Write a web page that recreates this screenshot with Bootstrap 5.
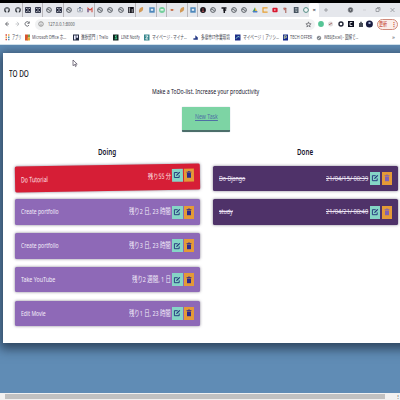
<!DOCTYPE html>
<html lang="ja">
<head>
<meta charset="utf-8">
<title>TO DO</title>
<link href="https://cdn.jsdelivr.net/npm/bootstrap@5.3.0/dist/css/bootstrap.min.css" rel="stylesheet">
<style>
body{width:400px;height:400px;overflow:hidden;background:#608cb5;font-family:"Noto Sans","Noto Sans CJK JP",sans-serif;font-size:6px;line-height:1;color:#17152b}
svg{display:block;flex:none}
.fit{white-space:nowrap;transform-origin:0 50%;flex:none}
.topline{height:3px;background:#000}
.tabs{height:14px;background:#e5e7ec;padding-left:2.3px}
.tabs .tb{width:10.3px;height:14px;flex:none}
.tabs .sep{box-shadow:inset -1px 0 #b9b7bb}
.tabs .tab-on{width:10px;background:#fff;border-radius:2px 2px 0 0;margin-left:-2px}
.tools{height:14px;background:#fff;padding-left:5px}
.addr{width:280px;height:11px;border-radius:6px;background:#f1f2f3;margin-left:4px;padding:0 3px;color:#55575b}
.renew{width:21px;height:11px;border:1px solid #cf8a7c;border-radius:6px;background:#fbeeea;color:#c5402d;font-size:6px;margin-left:4px}
.marks{height:14px;background:#fff;color:#4a4c55;font-size:5.8px;display:grid;grid-template-columns:20px 48px 40px 31px 49px 42px 48px 33px 76px 10px;padding-left:5px;border-bottom:1px solid #cfe0ea}
.marks>div{display:flex;align-items:center;gap:2px}
.stage{height:348px;padding:8px 0 0 2.5px;overflow:hidden}
.sheet{height:290px;width:410px;background:#fff;box-shadow:0 3px 10px 3px rgba(25,40,60,.7);padding:16px 12.5px 0 12.5px}
.brand{font-size:8.2px;font-weight:500;margin-left:-6px;height:10px;color:#101018}
.lead-line{margin:8.5px 0 0 136.5px;height:9px;font-size:7.4px}
.new-task{width:48px;height:24.5px;margin:10.5px 0 0 167px;background:#7dd4a4;border:0;border-bottom:2.5px solid #4c6e6a;border-radius:1px;box-shadow:0 0 1px #7898b0;color:#4f70a5;font-size:7.7px;padding-bottom:2px}
.boards{display:grid;grid-template-columns:185px 185px;column-gap:12.5px;margin-top:15px}
.boards h2{font-size:8.2px;font-weight:600;line-height:10px;height:11px;margin:0 0 8px;display:flex;justify-content:center;color:#17152b}
.task{height:25.6px;margin-bottom:8.2px;background:#8e69b7;border-radius:1.5px;box-shadow:0 0 3px rgba(50,40,70,.6);color:#f3edf9;padding:0 6px;font-size:7.5px}
.task .act{width:10.5px;height:13px;background:#85d5c6;color:#1f2f78;margin-left:1.5px}
.task .act+.act{width:10px;background:#e49a37;margin-left:1.3px;color:#2c2a8e}
.task.late{background:#d61e36;transform:rotate(-1deg);margin-top:-.5px;margin-bottom:8.7px;color:#ffe7ea}
.task.late .act{margin-bottom:3px}
.task.late .fit{padding-top:2px}
.task.late .fit.ms-auto{padding-top:0}
.task.ended{background:#4f3269;text-decoration:line-through;color:#ece4f4}
.task.ended .act+.act{color:#8062b4}
.hbar{height:7px;background:#f1f1f1;padding:1px 0 1px 5px}
.hbar .thumb{width:380px;height:5px;background:#c1c1c1}
.hbar .grip{font-size:4px}
.pointer{position:absolute;left:72px;top:59px}
</style>
<script src="https://cdn.jsdelivr.net/npm/bootstrap@5.3.0/dist/js/bootstrap.bundle.min.js"></script>
</head>
<body>
<svg width="0" height="0" class="position-absolute">
<defs>
<symbol id="git" viewBox="0 0 8 8"><circle cx="4" cy="4" r="2.8" fill="#30343a"/><path d="M2.5 2.2 3.3 2.5H4.7L5.5 2.2V4.5L4.8 5.2V7H3.2V5.2L2.5 4.5Z" fill="#dfe2e8"/></symbol>
<symbol id="box" viewBox="0 0 8 8"><path d="M1.2 1.2h5.6v5.6H1.2z" fill="#10162b"/><path d="M2 2.3 4 3.2 6 2.3M2 5.6 4 4.8 6 5.6" stroke="#e8e9f0" fill="none" stroke-width=".8"/></symbol>
<symbol id="globe" viewBox="0 0 8 8"><circle cx="4" cy="4" r="2.4" fill="#dfe2e6" stroke="#5f646b"/><path d="M2 3.2 4 3.4 4.3 4.5 5.8 5" stroke="#5f646b" fill="none" stroke-width=".9"/></symbol>
<symbol id="cal" viewBox="0 0 8 8"><path d="M1.7 2.5h4.6v3.3H1.7z" fill="#f4f5f8" stroke="#8a929c" stroke-width=".7"/><path d="M3 1.6h2M3 4.1h2" stroke="#536d92"/></symbol>
<symbol id="mail" viewBox="0 0 8 8"><path d="M2 6.2V2.3L4 4.1 6 2.3V6.2" stroke="#d44a3c" fill="none" stroke-width="1.1"/><path d="M2 3v3.2" stroke="#4a6cb8" stroke-width="1"/></symbol>
<symbol id="black" viewBox="0 0 8 8"><path d="M1.2 1h5.6v6H1.2z" fill="#101018"/><path d="M2.6 1.5v5M5.2 3v3.5" stroke="#eee" stroke-width=".7"/></symbol>
<symbol id="leaf" viewBox="0 0 8 8"><path d="M2 6.7Q1.2 1.7 6 1.1 7.1 5.6 2 6.7" fill="#d29a58"/></symbol>
<symbol id="blue" viewBox="0 0 8 8"><path d="M1.3 1.3h5.4v5.4H1.3z" fill="#4d87bb"/><path d="M2.8 2.8h2.4v2H2.8z" fill="#e5eef6"/></symbol>
<symbol id="green" viewBox="0 0 8 8"><circle cx="4" cy="4" r="3" fill="#73cf9c"/><path d="M2.5 3h3v1.7h-3z" fill="#e6f5ec"/></symbol>
<symbol id="dash" viewBox="0 0 8 8"><path d="M1.5 4Q4 2 6.5 4 4 5.4 1.5 4" fill="#e7a26b"/><path d="M3 4h2" stroke="#a53c31"/></symbol>
<symbol id="ball" viewBox="0 0 8 8"><circle cx="4" cy="4" r="2.9" fill="#15131a"/><path d="M4 2.2v3M2.8 5.4h2.4" stroke="#c65d5d" stroke-width=".8"/></symbol>
<symbol id="mono" viewBox="0 0 8 8"><path d="M1.5 2h5M3.2 4h3M4.3 2v5" stroke="#17171c" stroke-width="1.5"/></symbol>
<symbol id="drive" viewBox="0 0 8 8"><path d="M4 1.3 6.6 5.9H4Z" fill="#e3b73c"/><path d="M4 1.3 1.4 5.9H4Z" fill="#3e9b66"/><path d="M2 5h4.3v1.5H2z" fill="#4a7bc9"/></symbol>
<symbol id="orange" viewBox="0 0 8 8"><path d="M6.6 1.9H2V6.1h4.6" fill="none" stroke="#e7a02f" stroke-width="1.2"/><path d="M4 3h2v2H4z" fill="#f4e5ca"/></symbol>
<symbol id="play" viewBox="0 0 8 8"><rect x="1.4" y="1.8" width="5.2" height="4.4" rx="1" fill="#d8182f"/><path d="M3.4 3v2L5 4z" fill="#fff"/></symbol>
<symbol id="para" viewBox="0 0 8 8"><path d="M2.5 2.3h2.7M4.8 2v5" stroke="#a15750" stroke-width="1"/><path d="M2.7 1.8h1.6v2.4H2.7z" fill="#bf766d"/></symbol>
<symbol id="slate" viewBox="0 0 8 8"><path d="M1.8 1h4.7v6H1.8z" fill="#46535f"/><path d="M3 2.4h2.4M3 4h2.4M3.5 5.5h1.7" stroke="#cbd2d9" stroke-width=".7"/></symbol>
<symbol id="ring" viewBox="0 0 8 8"><circle cx="4" cy="4" r="2.4" fill="#f4f6f7" stroke="#4f8a81"/></symbol>
<symbol id="edit" viewBox="0 0 8 8"><path d="M4.7 1.7H1.4v5h4.8V4.4" fill="none" stroke="currentColor" stroke-width=".9"/><path d="M3.1 5.1 3.4 3.9 6.4.9 7.2 1.7 4.2 4.8Z" fill="currentColor"/></symbol>
<symbol id="bin" viewBox="0 0 8 8"><path d="M1.6 1.6h4.8M3.2 1h1.6" stroke="currentColor" stroke-width=".9"/><path d="M2 2.5h4V7.2H2z" fill="currentColor"/></symbol>
</defs>
</svg>

<div class="topline"></div>
<div class="tabs d-flex" id="tabs"></div>
<div class="tools d-flex align-items-center">
  <svg width="26" height="8" viewBox="0 0 26 8" fill="none" stroke="#55585e" stroke-width=".8"><path d="M2.6 1.8.6 4 2.6 6.2M.6 4H4"/><path d="M12 1.8 14 4 12 6.2M14 4H10.6" stroke="#b9bbbf"/><path d="M24 2.6A2.2 2.2 0 1 0 24 5.2M24.3 1.5V3.3H22.3"/></svg>
  <div class="addr d-flex align-items-center">
    <svg width="6" height="6" viewBox="0 0 6 6" fill="none" stroke="#777" stroke-width=".7"><circle cx="3" cy="3" r="2.3"/><path d="M3 1.5v.7M3 2.7v2"/></svg>
    <span class="fit ms-1" data-w="27">127.0.0.1:8000</span>
    <svg class="ms-auto" width="7" height="7" viewBox="0 0 8 8" fill="none" stroke="#5a5c62" stroke-width=".8"><path d="M4 1 4.8 3.2H7L5.2 4.6 5.9 6.8 4 5.5 2.1 6.8 2.8 4.6 1 3.2H3.2Z"/></svg>
  </div>
  <svg width="58" height="8" viewBox="0 0 58 8"><circle cx="6" cy="4" r="2.9" fill="#56c596"/><circle cx="15.5" cy="4" r="2.5" fill="#dedbdc"/><path d="M14 4.8 17 3" stroke="#a8706f"/><circle cx="26" cy="4" r="2" fill="none" stroke="#222636" stroke-width="1.4"/><path d="M33 1h6v6h-6z" fill="#0d1020"/><path d="M37.3 2.5H35v3h2.3" fill="none" stroke="#fff" stroke-width=".8"/><path d="M44 3h1.2V1.8h1.6V3H48v4h-4z" fill="#454b55"/><circle cx="54.4" cy="4" r="3.5" fill="#181c40"/><path d="M53.5 2h2v2h-2z" fill="#a9b5d4"/></svg>
  <div class="renew d-flex align-items-center justify-content-center"><span class="fit" data-w="8">更新</span><b class="ms-1">⋮</b></div>
</div>
<div class="marks">
  <div><svg width="5" height="7" viewBox="0 0 5 7"><path d="M.5 1h1.5M.5 5.5h1.5" stroke="#d94a3c" stroke-width="1.4"/><path d="M3 1h1.5M.5 3.3h1.5" stroke="#e7a23f" stroke-width="1.4"/><path d="M3 3.3h1.5M3 5.5h1.5" stroke="#4f8fb5" stroke-width="1.4"/></svg><span class="fit" data-w="9">アプリ</span></div>
  <div><svg width="5" height="7" viewBox="0 0 5 7"><path d="M0 .5h3V6.5H0z" fill="#d6552f"/><path d="M3 .5h2v3H3z" fill="#7aa24a"/><path d="M2.5 3.5H5v3H2.5z" fill="#e6ac37"/></svg><span class="fit" data-w="34">Microsoft Office ホ...</span></div>
  <div><svg width="6" height="7" viewBox="0 0 6 7"><path d="M0 .5h6v6H0z" fill="#232b42"/><path d="M1 1.5h1.7v4H1zM3.4 1.5H5v2.3H3.4z" fill="#eef"/></svg><span class="fit" data-w="27">進捗部門 | Trello</span></div>
  <div><svg width="6" height="7" viewBox="0 0 6 7"><path d="M0 .5h5.5v6H0z" fill="#12231f"/><path d="M4 2H2.2L3.8 4.8H1.7" stroke="#42cf8b" fill="none"/></svg><span class="fit" data-w="19">LINE Notify</span></div>
  <div><svg width="6" height="7" viewBox="0 0 6 7"><path d="M0 .5h5.5v6H0z" fill="#36868d"/><path d="M1.5 2H4L1.7 5H4" stroke="#e5f1f0" fill="none"/></svg><span class="fit" data-w="35">マイページ - マイナ...</span></div>
  <div><svg width="6" height="7" viewBox="0 0 6 7"><path d="M2.3 1.3 4.8 3.5V5.7H0.4V4.2H2.3z" fill="#273b86"/></svg><span class="fit" data-w="29">多摩市IT作業環境</span></div>
  <div><svg width="6" height="7" viewBox="0 0 6 7"><path d="M0 .5h5.5v6H0z" fill="#1d2d87"/><path d="M1 4.7Q3 1 4.6 3" stroke="#83cbd0" fill="none"/></svg><span class="fit" data-w="36">マイページ | アソシ...</span></div>
  <div><svg width="5" height="7" viewBox="0 0 5 7"><path d="M0 .5h5v6H0z" fill="#152a8e"/><path d="M1.3 5V1.8h2v2H1.5" stroke="#d7df9c" fill="none" stroke-width=".8"/></svg><span class="fit" data-w="22">TECH OFFER</span></div>
  <div><svg width="6" height="8"><use href="#globe" width="6" height="8"/></svg><span class="fit" data-w="34">WBS(Excel) - 図解で...</span></div>
  <div>»</div>
</div>

<main class="stage">
  <section class="sheet">
    <div class="brand d-flex align-items-center"><span class="fit" data-w="19.5">TO DO</span></div>
    <div class="lead-line d-flex align-items-center"><span class="fit" data-w="107.5">Make a ToDo-list. Increase your productivity</span></div>
    <a class="new-task d-flex align-items-center justify-content-center" href="#"><span class="fit" data-w="23">New Task</span></a>
    <div class="boards">
      <div id="doing"><h2><span class="fit" data-w="18.5">Doing</span></h2></div>
      <div id="done"><h2><span class="fit" data-w="16">Done</span></h2></div>
    </div>
  </section>
</main>
<div class="hbar d-flex align-items-center"><div class="thumb"></div><span class="grip ms-auto me-0">⋮</span></div>
<svg class="pointer" width="6" height="9" viewBox="0 0 6 9"><path d="M1 1V6.7L2.5 5.5 3.5 7.6 4.3 7.1 3.4 5.1H5.2Z" fill="#fff" stroke="#4a4458" stroke-width=".7"/></svg>

<script>
const tabIcons = 'git git| box box| globe box| globe cal mail| globe globe globe black| leaf blue| green| dash leaf| blue| ball globe mono globe globe drive orange play para slate ring'.split(' ');
document.getElementById('tabs').innerHTML = tabIcons.map(n =>
  `<div class="tb d-flex align-items-center justify-content-center ${n.endsWith('|') ? 'sep' : ''}"><svg width="8" height="8"><use href="#${n.replace('|','')}"/></svg></div>`).join('') +
  `<div class="tab-on d-flex align-items-center justify-content-center">×</div>
   <svg width="80" height="14" viewBox="0 0 80 14" fill="none" stroke="#85888e" stroke-width=".7"><path d="M5 7h4M7 5v4"/><circle cx="31.5" cy="7" r="2.4" fill="#555960"/><path d="M30.5 6.5h2l-1 1.2z" fill="#fff" stroke="none"/><path d="M44 7h3" stroke="#c4c6ca"/><path d="M57 5.5h3v3h-3zM58 4.5h3v3M71.5 5l4 4M75.5 5l-4 4"/></svg>`;
const tasks = {
  doing: [['Do Tutorial',27,'残り55 分',23,'late'],['Create portfolio',38,'残り2 日, 23 時間',41.5,''],['Create portfolio',38,'残り3 日, 23 時間',41.5,''],['Take YouTube',34,'残り2 週間, 1 日',39,''],['Edit Movie',25,'残り1 日, 23 時間',41.5,'']],
  done: [['Do Django',26,'21/04/15/ 08:39',42,'ended'],['study',13.5,'21/04/21/ 08:40',42,'ended']]
};
for (const id in tasks) tasks[id].forEach(([n, a, t, b, c]) =>
  document.getElementById(id).insertAdjacentHTML('beforeend',
  `<div class="task d-flex align-items-center ${c}"><span class="fit" data-w="${a}">${n}</span><span class="fit ms-auto" data-w="${b}">${t}</span><span class="act d-flex align-items-center justify-content-center"><svg width="8" height="8"><use href="#edit"/></svg></span><span class="act d-flex align-items-center justify-content-center"><svg width="8" height="8"><use href="#bin"/></svg></span></div>`));
/* condense every label to its column width */
document.querySelectorAll('.fit').forEach(e => {
  e.style.display = 'block';
  const full = e.offsetWidth, w = +e.dataset.w;
  e.style.transform = `scaleX(${w / full})`;
  e.style.width = full + 'px';
  e.style.marginRight = (w - full) + 'px';
});
</script>
</body>
</html>
